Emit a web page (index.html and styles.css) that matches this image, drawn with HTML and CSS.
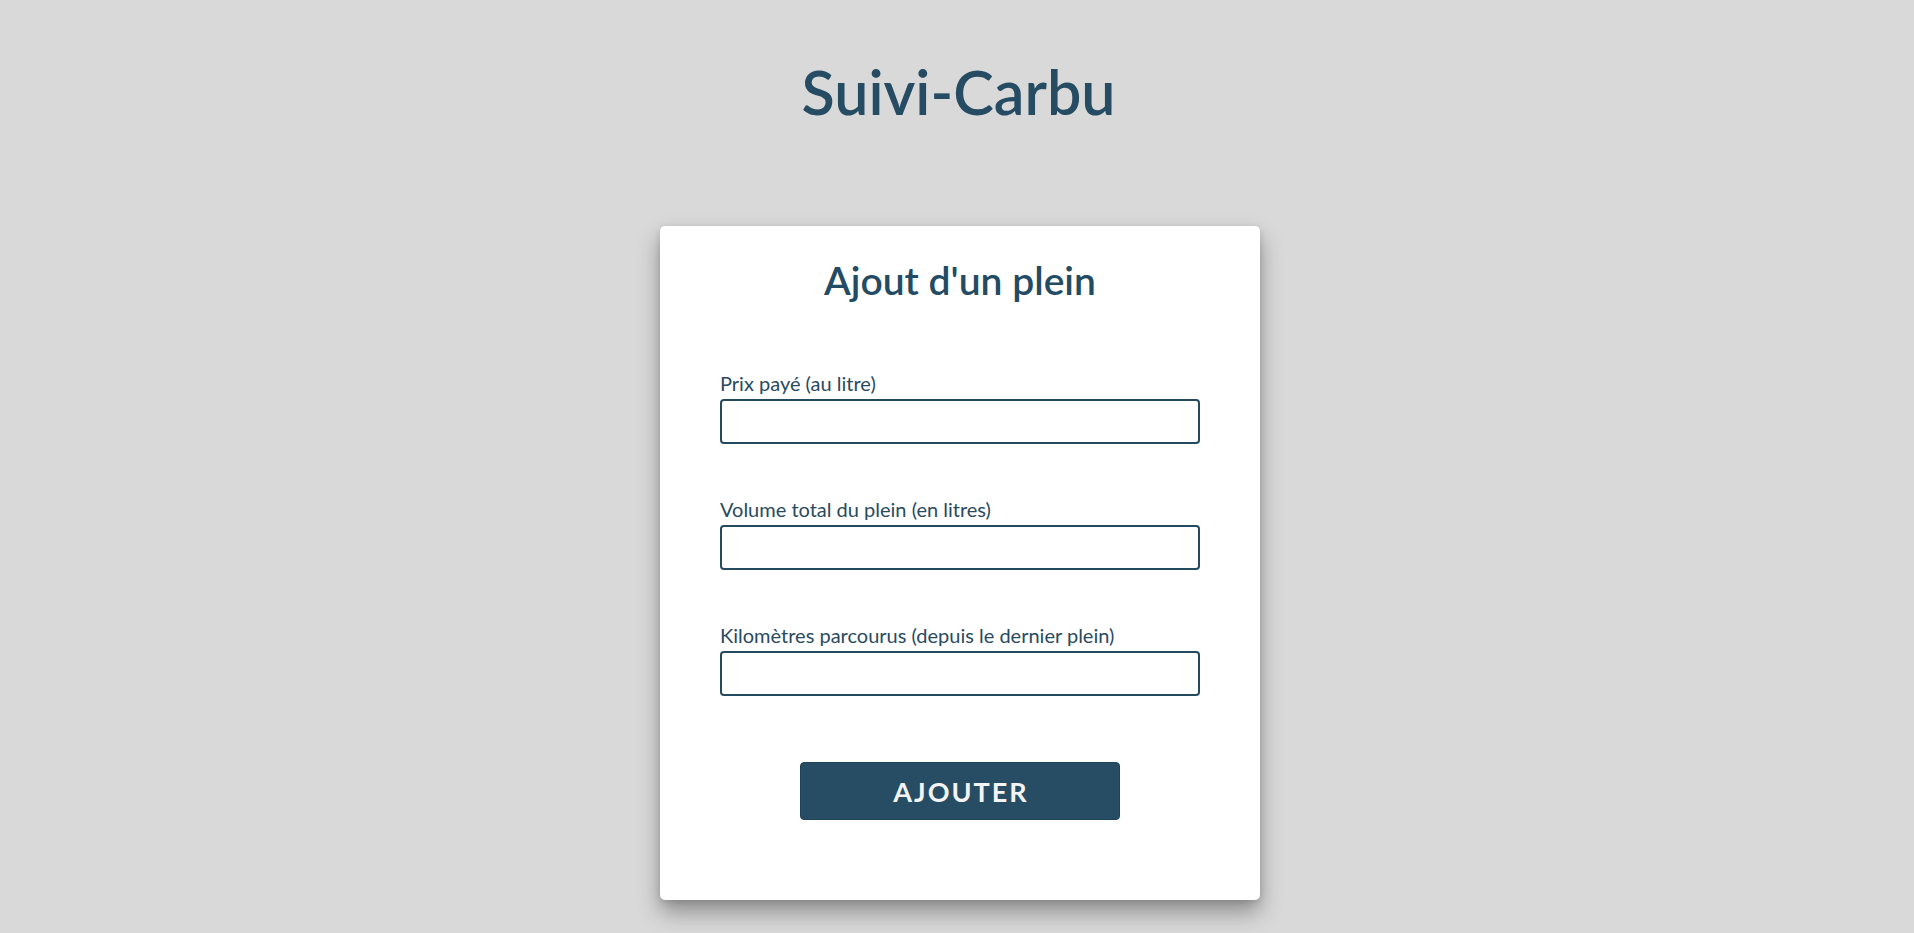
FILE: index.html
```html
<!DOCTYPE html>
<html lang="fr">
<head>
<meta charset="utf-8">
<title>Suivi-Carbu</title>
<link rel="stylesheet" href="styles.css">
</head>
<body>
<h1 class="app-title">Suivi-Carbu</h1>
<main class="card">
  <h2 class="card-title">Ajout d'un plein</h2>
  <form class="form">
    <div class="field">
      <label class="field-label" for="prix">Prix payé (au litre)</label>
      <input class="field-input" id="prix" type="text">
    </div>
    <div class="field">
      <label class="field-label" for="volume">Volume total du plein (en litres)</label>
      <input class="field-input" id="volume" type="text">
    </div>
    <div class="field">
      <label class="field-label" for="km">Kilomètres parcourus (depuis le dernier plein)</label>
      <input class="field-input" id="km" type="text">
    </div>
    <div class="actions">
      <button class="btn" type="button">AJOUTER</button>
    </div>
  </form>
</main>
</body>
</html>
```

FILE: styles.css
```css
* { box-sizing: border-box; }

html, body {
  margin: 0;
  padding: 0;
}

body {
  background: #d9d9d9;
  font-family: Lato, "Open Sans", sans-serif;
  color: #244c63;
  min-height: 933px;
  display: flex;
  flex-direction: column;
  align-items: center;
}

.app-title {
  margin: 55px 0 0 3px;
  font-size: 61px;
  line-height: 73px;
  font-weight: 600;
  color: #254c63;
  text-align: center;
}

.card {
  margin: 98px 0 0 6px;
  width: 600px;
  background: #ffffff;
  border-radius: 5px;
  padding: 30px 60px 80px;
  box-shadow: 0 12px 22px rgba(0, 0, 0, 0.35), 0 2px 6px rgba(0, 0, 0, 0.12);
}

.card-title {
  margin: 0;
  font-size: 39px;
  line-height: 48px;
  font-weight: 600;
  text-align: center;
  color: #234b63;
}

.form {
  margin-top: 67px;
  display: flex;
  flex-direction: column;
  gap: 53px;
}

.field {
  display: flex;
  flex-direction: column;
  gap: 4px;
}

.field-label {
  font-size: 20px;
  line-height: 24px;
  font-weight: 400;
  color: #2a4a5e;
}

.field-input {
  width: 480px;
  height: 45px;
  border: 2px solid #244a60;
  border-radius: 4px;
  background: #fff;
  font-family: inherit;
  font-size: 18px;
  padding: 0 10px;
  outline: none;
}

.actions {
  margin-top: 13px;
  display: flex;
  justify-content: center;
}

.btn {
  width: 320px;
  height: 58px;
  border: 1px solid #1f4358;
  border-radius: 4px;
  background: #264d64;
  color: #f4f4f4;
  font-family: inherit;
  font-size: 27px;
  font-weight: 700;
  letter-spacing: 2px;
  padding: 0 0 0 2px;
  cursor: pointer;
}
```
